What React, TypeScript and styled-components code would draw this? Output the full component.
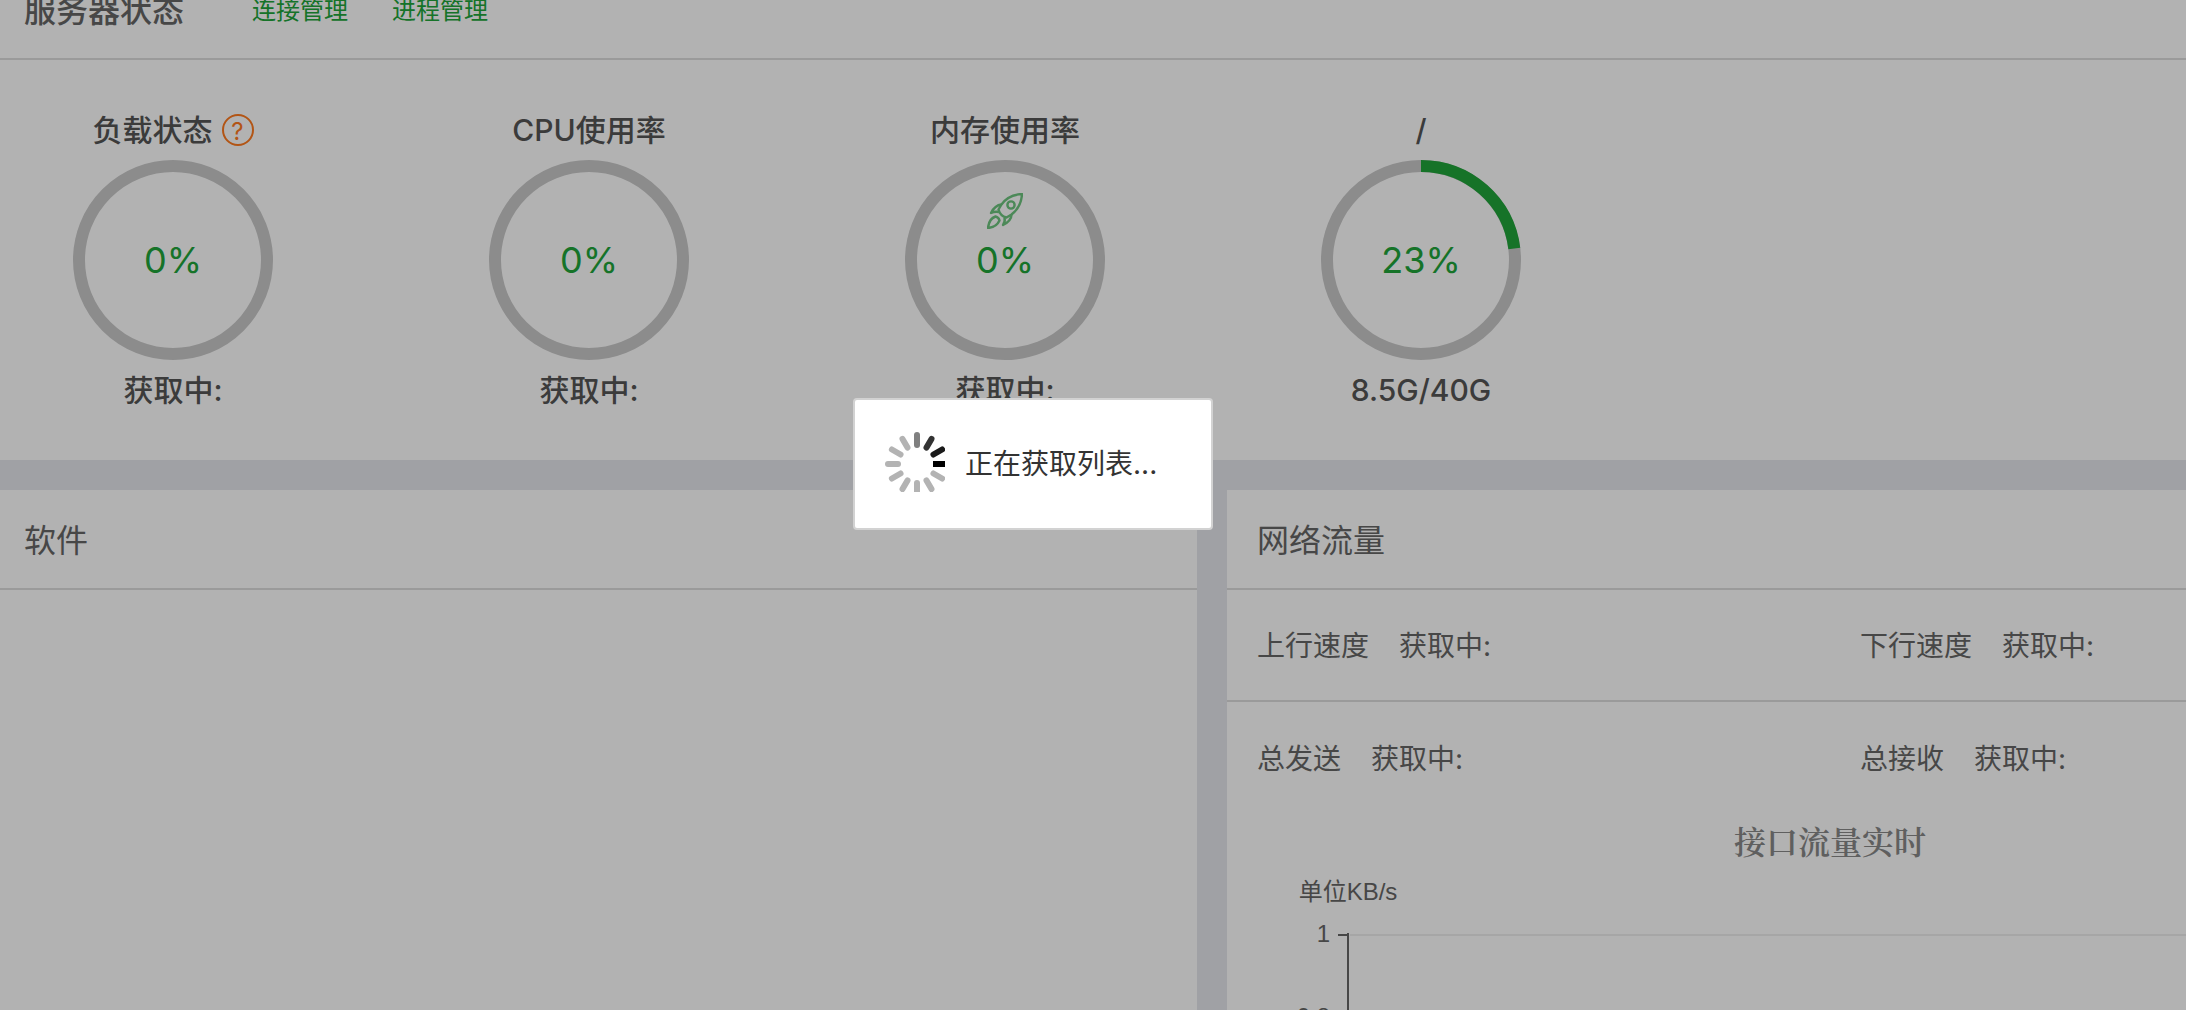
import React from "react";
import styled, { createGlobalStyle } from "styled-components";

const sans = `Inter, "Noto Sans CJK SC", sans-serif`;

const GlobalStyle = createGlobalStyle`
  * { box-sizing: border-box; }
  body {
    margin: 0;
    background: #e6e7ed;
    color: #666;
    font-family: ${sans};
    font-size: 28px;
  }
  a { color: inherit; text-decoration: none; }
  h2, h3, p, dl, dt, dd, ul { margin: 0; padding: 0; }
`;

const Viewport = styled.div`
  height: 100vh;
  overflow: hidden;
`;

/* The dashboard is wider than the window and scrolled down a little. */
const Dashboard = styled.main`
  width: calc(100% + 247px);
  margin-top: -40px;
  display: flex;
  flex-direction: column;
  gap: 30px;
`;

const Panel = styled.section`
  background: #fff;
  min-height: 560px;
`;

const StatusPanel = styled.section`
  background: #fff;
`;

const PanelHeader = styled.header<{ $inset: number }>`
  display: flex;
  align-items: center;
  height: 100px;
  padding: 4px ${(p) => p.$inset}px 0;
  border-bottom: 2px solid #ddd;
`;

const PanelTitle = styled.h2<{ $strong?: boolean }>`
  font-size: 32px;
  line-height: 48px;
  font-weight: ${(p) => (p.$strong ? 500 : 400)};
`;

const HeaderLinks = styled.nav`
  display: flex;
  gap: 44px;
  margin-left: 68px;
  color: #20a53a;
  font-size: 24px;
  line-height: 36px;
`;

const Gauges = styled.ul`
  display: flex;
  gap: 216px;
  padding: 54px 73px;
  list-style: none;
`;

const Gauge = styled.li`
  display: flex;
  flex-direction: column;
  align-items: center;
  gap: 14px;
  width: 200px;
  color: #555;
`;

const GaugeLabel = styled.h3`
  display: flex;
  align-items: center;
  gap: 9px;
  height: 32px;
  font-size: 30px;
  line-height: 32px;
  font-weight: 500;
  white-space: nowrap;
`;

const HelpLink = styled.a`
  width: 32px;
  height: 32px;
  border: 2px solid #ff7a1f;
  border-radius: 50%;
  color: #ff7a1f;
  font-size: 24px;
  font-weight: 400;
  line-height: 32px;
  text-align: center;
`;

const Dial = styled.div`
  position: relative;
  display: grid;
  place-items: center;
  width: 200px;
  height: 200px;
  color: #20a53a;
  font-size: 36px;

  > * { grid-area: 1 / 1; }
`;

const Rocket = styled.svg`
  position: absolute;
  top: 33px;
  left: 82px;
`;

const Columns = styled.div`
  display: grid;
  grid-template-columns: 1197fr 1206fr;
  gap: 30px;
`;

const TrafficRow = styled.dl<{ $divided?: boolean }>`
  display: grid;
  grid-template-columns: 1fr 1fr;
  align-items: center;
  height: 112px;
  padding-top: 2px;
  border-bottom: ${(p) => (p.$divided ? "2px solid #ddd" : "none")};
`;

const TrafficStat = styled.div`
  display: flex;
  gap: 30px;
  padding-left: 30px;
  line-height: 42px;
`;

const ChartSvg = styled.svg`
  display: block;
  width: 100%;
  height: 540px;
  font-family: "Liberation Sans", "Noto Sans CJK SC", sans-serif;
  font-size: 24px;
  fill: #666;
`;

const ChartTitle = styled.text`
  font-family: "Noto Serif CJK SC", "Noto Sans CJK SC", serif;
  font-size: 32px;
  font-weight: 600;
  fill: #888;
`;

const Shade = styled.div`
  position: fixed;
  inset: 0;
  display: flex;
  align-items: center;
  justify-content: center;
  padding: 0 120px 82px 0;
  background: rgba(0, 0, 0, 0.3);
`;

const LoadingDialog = styled.div`
  display: flex;
  align-items: center;
  gap: 20px;
  width: 360px;
  height: 132px;
  padding-left: 30px;
  border: 2px solid #d2d2d2;
  border-radius: 4px;
  background: #fff;
  color: #333;
  line-height: 42px;
`;

const SpinnerSvg = styled.svg`
  margin-bottom: 4px;
`;

function Ring({ percent }: { percent: number }) {
  const r = 94;
  const length = 2 * Math.PI * r;
  return (
    <svg width="200" height="200" viewBox="0 0 200 200" fill="none" strokeWidth="12">
      <circle cx="100" cy="100" r={r} stroke="#c9c9c9" />
      {percent > 0 && (
        <circle
          cx="100"
          cy="100"
          r={r}
          stroke="#20a53a"
          strokeDasharray={`${(length * percent) / 100} ${length}`}
          transform="rotate(-90 100 100)"
        />
      )}
    </svg>
  );
}

function RocketIcon() {
  return (
    <Rocket width="36" height="36" viewBox="0 0 36 36" fill="none" stroke="#20a53a" strokeWidth="2.4" strokeLinejoin="round" opacity="0.65">
      <path d="M35 1C27 1.500 19 5 14.500 11.500L11.500 16.500C12.500 20.500 15.500 23.500 19.500 24.500L24.500 21.500C31 16.500 34.500 9 35 1Z" />
      <circle cx="24" cy="12" r="3.600" />
      <path d="M14.500 11.500C9.500 12 6.500 15 4 20C7 18.500 9.500 18.500 12 19" />
      <path d="M24.500 21.500C24.500 26 21 29.500 16 32C18 29.500 18 27 17.500 24.500" />
      <path d="M8.500 23.500C4 25 1.500 30 1 35C6 34.500 10.500 32 12.500 27.500C12 25.500 10.500 24 8.500 23.500Z" />
    </Rocket>
  );
}

const spokeColors = ["#808080", "#333", "#1a1a1a", "#000"];

function Spinner() {
  return (
    <SpinnerSvg width="60" height="60" viewBox="0 0 60 60" strokeWidth="6" aria-hidden="true">
      {Array.from({ length: 12 }, (_, i) => (
        <line
          key={i}
          x1="32"
          x2="32"
          y1={i === 3 ? 0 : 3}
          y2={i === 3 ? 16 : 13}
          stroke={spokeColors[i] ?? "#b3b3b3"}
          strokeLinecap={i === 3 ? "butt" : "round"}
          transform={`rotate(${i * 30} 32 32)`}
        />
      ))}
    </SpinnerSvg>
  );
}

function TrafficChart() {
  const ticks = ["1", "0.8", "0.6", "0.4", "0.2", "0"];
  return (
    <ChartSvg role="img" aria-label="接口流量实时">
      <ChartTitle x="50%" y="40" textAnchor="middle">接口流量实时</ChartTitle>
      <text x="121" y="86" textAnchor="middle">单位KB/s</text>
      {ticks.map((t, i) => (
        <g key={t}>
          <rect x="123" y={120 + i * 83} width="100%" height="2" fill="#eee" />
          <rect x="111" y={120 + i * 83} width="10" height="2" />
          <text x="103" y={128 + i * 83} textAnchor="end">{t}</text>
        </g>
      ))}
      <rect x="120" y="119" width="2" height="417" />
    </ChartSvg>
  );
}

const gauges = [
  { name: "负载状态", percent: 0, detail: "获取中:", help: true },
  { name: "CPU使用率", percent: 0, detail: "获取中:" },
  { name: "内存使用率", percent: 0, detail: "获取中:", rocket: true },
  { name: "/", percent: 23, detail: "8.5G/40G" },
];

const traffic = [
  ["上行速度", "下行速度"],
  ["总发送", "总接收"],
];

export default function App() {
  return (
    <Viewport>
      <GlobalStyle />
      <Dashboard>
        <StatusPanel>
          <PanelHeader $inset={24}>
            <PanelTitle $strong>服务器状态</PanelTitle>
            <HeaderLinks>
              <a href="#connections">连接管理</a>
              <a href="#processes">进程管理</a>
            </HeaderLinks>
          </PanelHeader>
          <Gauges>
            {gauges.map((g) => (
              <Gauge key={g.name}>
                <GaugeLabel>
                  {g.name}
                  {g.help && <HelpLink href="#load-help">?</HelpLink>}
                </GaugeLabel>
                <Dial>
                  <Ring percent={g.percent} />
                  {g.rocket && <RocketIcon />}
                  <span>{g.percent}%</span>
                </Dial>
                <GaugeLabel as="p">{g.detail}</GaugeLabel>
              </Gauge>
            ))}
          </Gauges>
        </StatusPanel>
        <Columns>
          <Panel>
            <PanelHeader $inset={24}>
              <PanelTitle>软件</PanelTitle>
            </PanelHeader>
          </Panel>
          <Panel>
            <PanelHeader $inset={30}>
              <PanelTitle>网络流量</PanelTitle>
            </PanelHeader>
            {traffic.map((row, i) => (
              <TrafficRow key={row[0]} $divided={i === 0}>
                {row.map((name) => (
                  <TrafficStat key={name}>
                    <dt>{name}</dt>
                    <dd>获取中:</dd>
                  </TrafficStat>
                ))}
              </TrafficRow>
            ))}
            <TrafficChart />
          </Panel>
        </Columns>
      </Dashboard>
      <Shade>
        <LoadingDialog role="dialog" aria-label="正在获取列表">
          <Spinner />
          <span>正在获取列表...</span>
        </LoadingDialog>
      </Shade>
    </Viewport>
  );
}
